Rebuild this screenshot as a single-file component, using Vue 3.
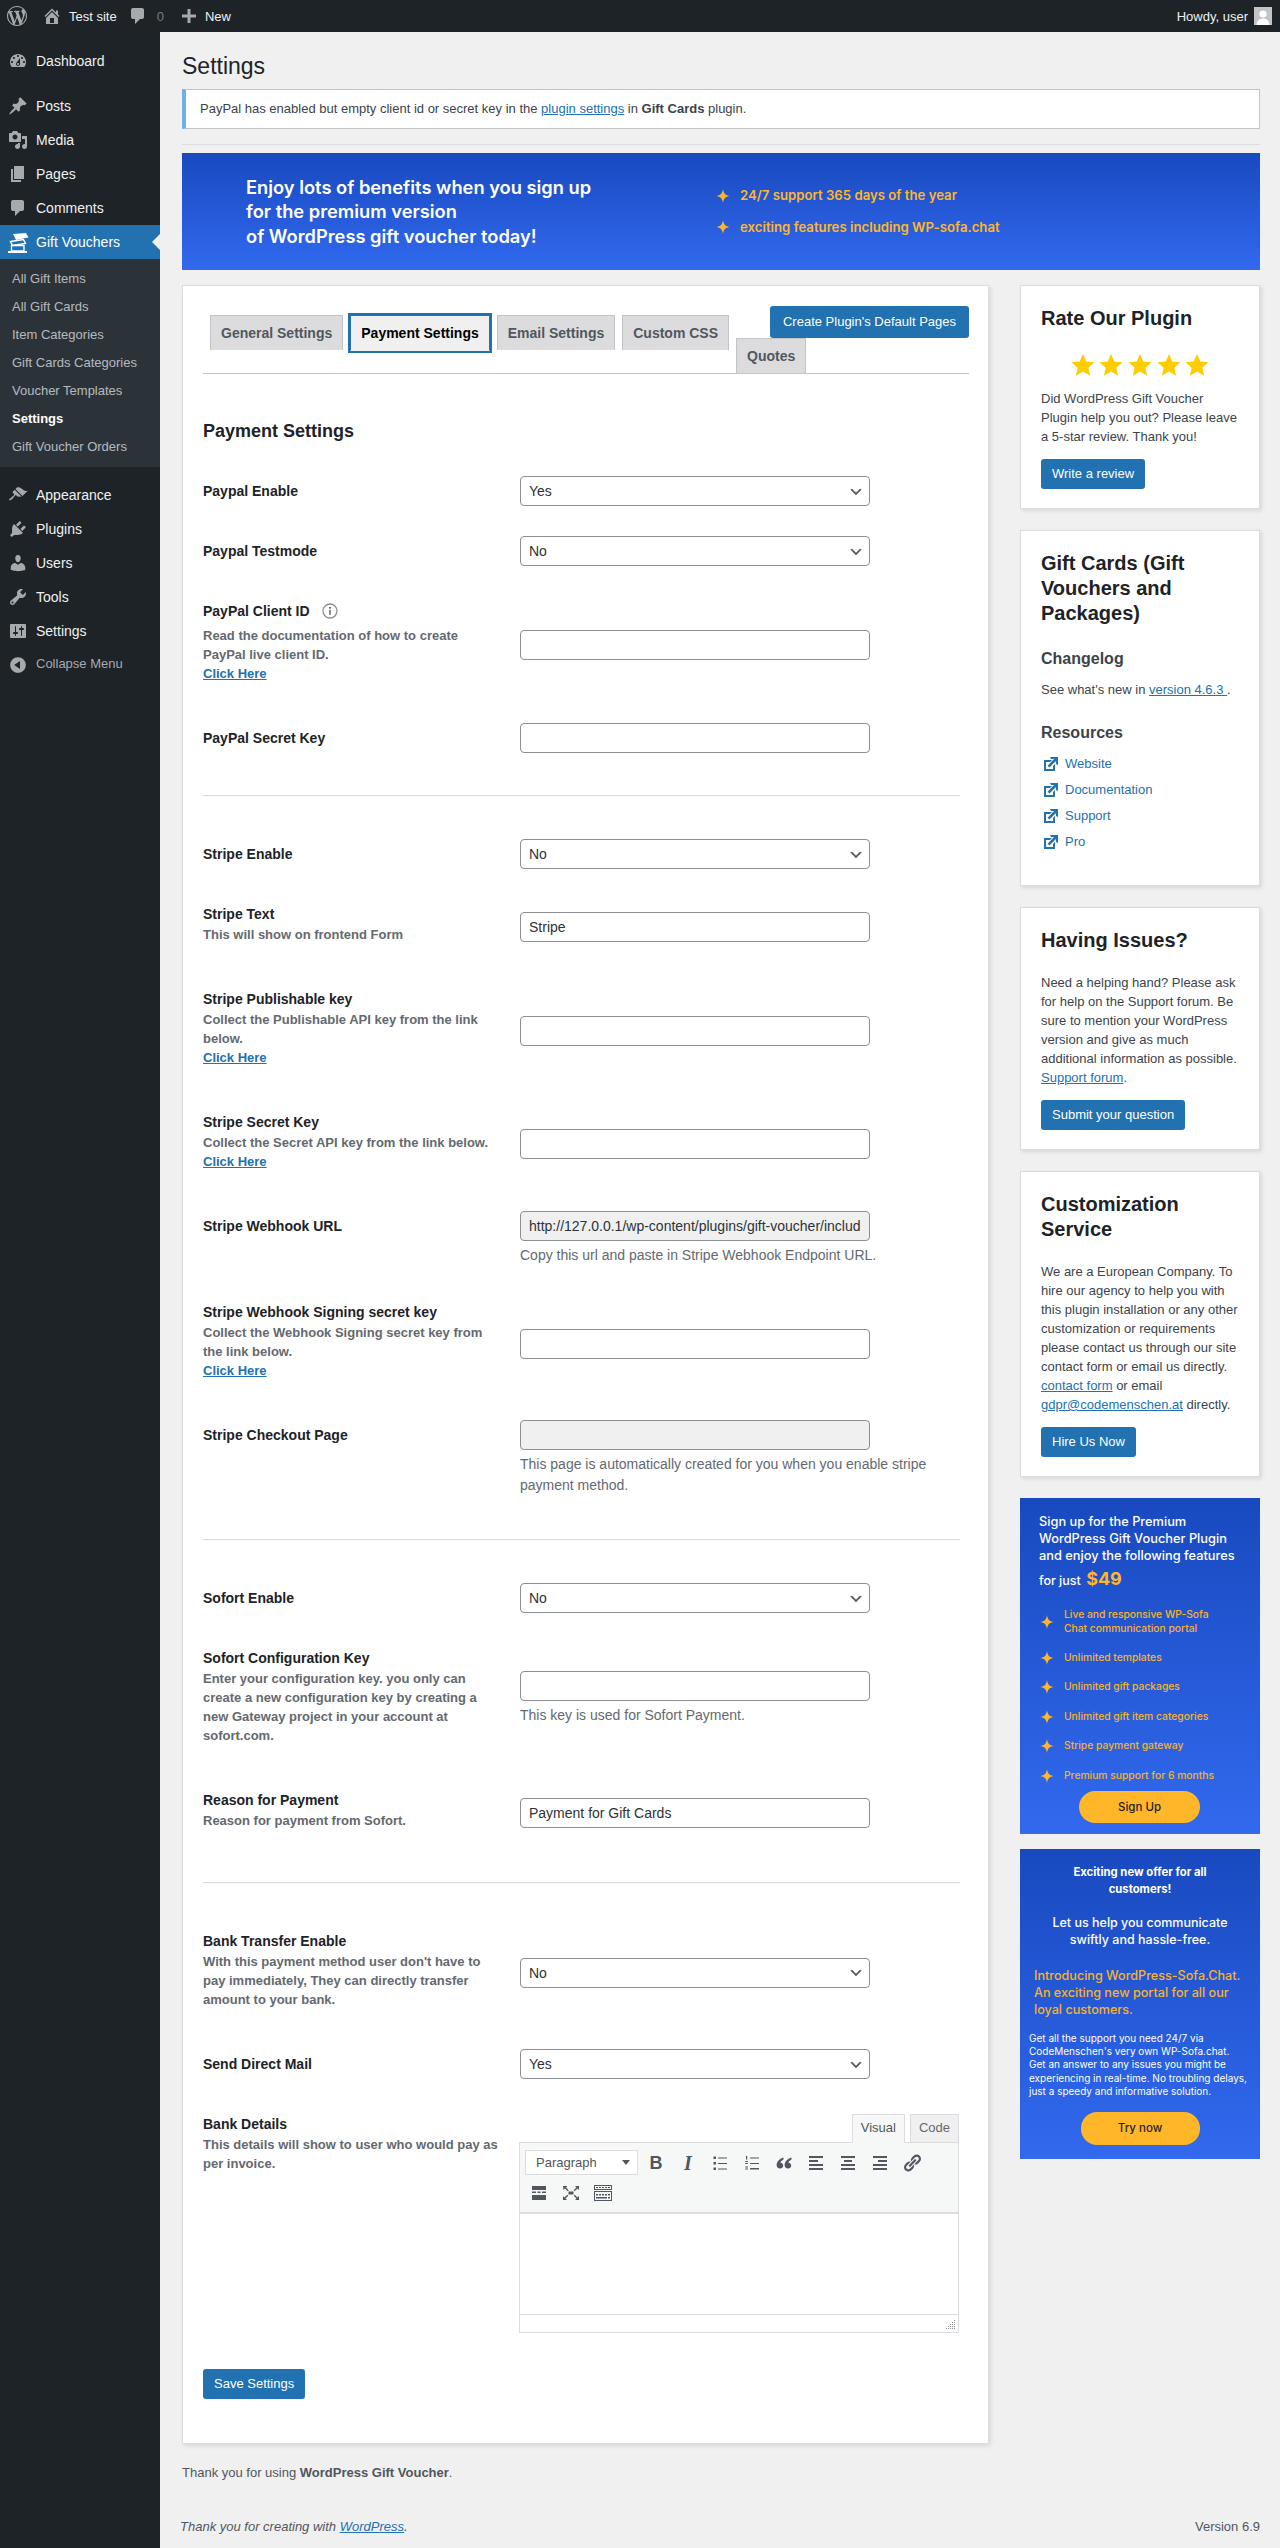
<template>
  <div class="page">
    <!-- top admin bar -->
    <header class="adminbar">
      <svg class="wp-logo" viewBox="0 0 20 20"><path :d="icons.wp" /></svg>
      <a class="bar-item first"><svg viewBox="0 0 20 20"><path :d="icons.home" /></svg>Test site</a>
      <a class="bar-item comments"><svg viewBox="0 0 20 20"><path :d="icons.comments" /></svg><span class="dim">0</span></a>
      <a class="bar-item plus"><svg viewBox="0 0 20 20"><path :d="icons.plus" /></svg>New</a>
      <div class="howdy">
        Howdy, user
        <svg class="avatar" viewBox="0 0 18 18">
          <rect width="18" height="18" fill="#c3c4c7" />
          <circle cx="9" cy="7" r="3.6" fill="#fff" />
          <path d="M2.5 18c.4-4.5 3-6.5 6.5-6.5s6.1 2 6.5 6.5z" fill="#fff" />
        </svg>
      </div>
    </header>

    <div class="layout">
      <!-- left menu -->
      <aside class="sidebar">
        <ul class="menu">
          <li v-for="item in menuItems" :key="item.text" :class="{ current: item.current, gap: item.gap }">
            <svg v-if="item.icon" class="menu-icon" viewBox="0 0 20 20"><path :d="icons[item.icon]" /></svg>
            <svg v-else class="menu-icon gift" viewBox="0 0 22 20">
              <path d="M6 1 19 0l2.5 4.5L9 7z" fill="#fff" />
              <path d="M3.5 8.5 16.5 6.5l2 4L5.5 12.5z" fill="none" stroke="#fff" stroke-width="1.4" />
              <path d="M4.5 12.5H17V18H4.5z" fill="none" stroke="#fff" stroke-width="1.4" />
              <path d="M1 18h19v2H1z" fill="#fff" />
            </svg>
            <span>{{ item.text }}</span>
            <ul v-if="item.current" class="submenu">
              <li v-for="sub in subItems" :key="sub" :class="{ active: sub === 'Settings' }">{{ sub }}</li>
            </ul>
          </li>
          <li class="collapse">
            <svg class="menu-icon" viewBox="0 0 20 20"><path :d="icons.collapse" /></svg>
            <span>Collapse Menu</span>
          </li>
        </ul>
      </aside>

      <main class="content">
        <h1 class="page-title">Settings</h1>
        <div class="notice">
          PayPal has enabled but empty client id or secret key in the <a href="#">plugin settings</a> in <b>Gift Cards</b> plugin.
        </div>
        <div class="top-rule"></div>

        <div class="promo">
          <p class="promo-title">Enjoy lots of benefits when you sign up<br />for the premium version<br />of WordPress gift voucher today!</p>
          <ul class="promo-list">
            <li><svg viewBox="0 0 24 24"><path :d="sparkle" /></svg>24/7 support 365 days of the year</li>
            <li><svg viewBox="0 0 24 24"><path :d="sparkle" /></svg>exciting features including WP-sofa.chat</li>
          </ul>
        </div>

        <div class="columns">
          <div class="main-col">
            <section class="card settings">
              <nav class="tabs">
                <a class="btn btn-create">Create Plugin's Default Pages</a>
                <a v-for="tab in tabs" :key="tab" class="tab" :class="{ active: tab === 'Payment Settings' }">{{ tab }}</a>
              </nav>

              <h2 class="section-title">Payment Settings</h2>

              <template v-for="(rows, i) in sections" :key="i">
                <hr v-if="i > 0" class="divider" />
                <table class="form-table">
                  <tbody>
                    <tr v-for="row in rows" :key="row.label">
                      <th>
                        <div class="label" :class="{ 'has-info': row.info }">
                          {{ row.label }}
                          <svg v-if="row.info" class="info" viewBox="0 0 16 16">
                            <circle cx="8" cy="8" r="7" fill="none" stroke="#8c8f94" stroke-width="1.3" />
                            <circle cx="8" cy="4.8" r="1" fill="#50575e" />
                            <rect x="7.3" y="6.8" width="1.4" height="5" fill="#50575e" />
                          </svg>
                        </div>
                        <div v-if="row.desc" class="desc">
                          {{ row.desc }}
                          <a v-if="row.link" href="#">Click Here</a>
                        </div>
                      </th>
                      <td>
                        <select v-if="row.type === 'select'" class="field select" :value="row.value">
                          <option>Yes</option>
                          <option>No</option>
                        </select>

                        <div v-else-if="row.type === 'editor'" class="editor">
                          <div class="editor-tabs">
                            <span class="etab on">Visual</span>
                            <span class="etab">Code</span>
                          </div>
                          <div class="toolbar">
                            <div class="format">Paragraph<i></i></div>
                            <span class="tool bold">B</span>
                            <span class="tool italic">I</span>
                            <span class="tool">
                              <svg viewBox="0 0 20 20"><path d="M3.5 3.5H6V6H3.500zm0 5.500H6v2.500H3.500zm0 5.500H6V17H3.500zM8 4.500h9v1H8zm0 5.500h9v1H8zm0 5.500h9v1H8z" /></svg>
                            </span>
                            <span class="tool">
                              <svg viewBox="0 0 20 20"><path d="M4 3h1.2v3.500H4zm-.8 5H6v.9H3.200zm0 2H6v.9H3.200zm0 3.500H6v.9H3.200zm0 2H6v.9H3.200zM8 4.500h9v1H8zm0 5.500h9v1H8zm0 5h9v1.500H8z" /></svg>
                            </span>
                            <span class="tool">
                              <svg viewBox="0 0 20 20"><path d="M9.5 4.500C5.800 5.800 3.500 7.800 2.800 10.500c-.7 2.800.8 5 3.200 5 1.800 0 3.200-1.300 3.200-3 0-1.600-1.200-2.800-2.800-2.800.4-1.200 1.400-2.300 3.100-3.100zm8 0c-3.700 1.300-6 3.300-6.700 6-.7 2.800.8 5 3.200 5 1.800 0 3.200-1.300 3.200-3 0-1.600-1.200-2.800-2.800-2.800.4-1.200 1.400-2.300 3.100-3.100z" /></svg>
                            </span>
                            <span class="tool">
                              <svg viewBox="0 0 20 20"><path d="M3 3h14v2H3zm0 4h9v2H3zm0 4h14v2H3zm0 4h14v2H3z" /></svg>
                            </span>
                            <span class="tool">
                              <svg viewBox="0 0 20 20"><path d="M3 3h14v2H3zm3 4h8v2H6zm-3 4h14v2H3zm0 4h14v2H3z" /></svg>
                            </span>
                            <span class="tool">
                              <svg viewBox="0 0 20 20"><path d="M3 3h14v2H3zm5 4h9v2H8zm-5 4h14v2H3zm0 4h14v2H3z" /></svg>
                            </span>
                            <span class="tool">
                              <svg viewBox="0 0 20 20"><path :d="icons.link" /></svg>
                            </span>
                            <span class="tool">
                              <svg viewBox="0 0 20 20"><path d="M3 3h14v4H3zm0 5.500h4V10H3zm5.500 0h3V10h-3zm4.500 0h4V10h-4zM3 12h14v5H3z" /></svg>
                            </span>
                            <span class="tool">
                              <svg viewBox="0 0 20 20"><path d="M7.5 8.500h5v3h-5zM2 3h4.500L5 4.500l2.800 2.800-1 1L4 5.500 2.500 7zm16 0v4l-1.500-1.500-2.800 2.800-1-1L15.500 4.500 14 3zM2 17v-4l1.500 1.500 2.800-2.800 1 1L4.500 15.500 6 17zm16 0h-4l1.500-1.500-2.800-2.800 1-1 2.800 2.800L18 13z" /></svg>
                            </span>
                            <span class="tool">
                              <svg viewBox="0 0 20 20" fill-rule="evenodd"><path d="M1 2h18v5H1zm1 1v3h16V3zM3 4h2v1H3zm3 0h2v1H6zm3 0h2v1H9zm3 0h2v1h-2zm3 0h2v1h-2zM1 8h18v10H1zm1 1v8h16V9zm1 2h2v1.500H3zm3 0h2v1.500H6zm3 0h2v1.500H9zm3 0h2v1.500h-2zm3 0h2v1.500h-2zM3 14h11v1.500H3zm12 0h2v1.500h-2z" /></svg>
                            </span>
                          </div>
                          <div class="editor-body"></div>
                          <div class="statusbar">
                            <svg class="grip" viewBox="0 0 10 10"><path d="M8 0h1v1H8zM8 2h1v1H8zM6 2h1v1H6zM8 4h1v1H8zM6 4h1v1H6zM4 4h1v1H4zM8 6h1v1H8zM6 6h1v1H6zM4 6h1v1H4zM2 6h1v1H2zM8 8h1v1H8zM6 8h1v1H6zM4 8h1v1H4zM2 8h1v1H2zM0 8h1v1H0z" /></svg>
                          </div>
                        </div>

                        <input
                          v-else
                          class="field"
                          type="text"
                          :value="row.value"
                          :readonly="row.readonly"
                          :disabled="row.disabled"
                          :class="{ locked: row.readonly || row.disabled }"
                        />
                        <p v-if="row.note" class="note">{{ row.note }}</p>
                      </td>
                    </tr>
                  </tbody>
                </table>
              </template>

              <a class="btn btn-save">Save Settings</a>
            </section>
            <p class="thanks">Thank you for using <b>WordPress Gift Voucher</b>.</p>
          </div>

          <!-- right column -->
          <aside class="side">
            <section class="card box box-rate">
              <h3>Rate Our Plugin</h3>
              <div class="stars">
                <svg v-for="n in 5" :key="n" viewBox="0 0 24 24"><path d="M12 1l3.3 7.600 8.200.7-6.200 5.400 1.900 8L12 18.500 4.800 22.700l1.900-8L.5 9.300l8.200-.7z" /></svg>
              </div>
              <p>Did WordPress Gift Voucher Plugin help you out? Please leave a 5-star review. Thank you!</p>
              <a class="btn">Write a review</a>
            </section>

            <section class="card box box-info">
              <h3>Gift Cards (Gift Vouchers and Packages)</h3>
              <h4>Changelog</h4>
              <p>See what's new in <a href="#">version 4.6.3 </a>.</p>
              <h4 class="res">Resources</h4>
              <ul class="links">
                <li v-for="link in resourceLinks" :key="link">
                  <svg viewBox="3 3 14 16"><path d="M9 3h8v8l-2-1V6.92l-6.58 6.59-1.84-1.84L13.08 5H10zm3 12v-3l2-2v7H3V6h8L9 8H5v7h7z" /></svg>
                  <a href="#">{{ link }}</a>
                </li>
              </ul>
            </section>

            <section class="card box box-issues">
              <h3>Having Issues?</h3>
              <p>Need a helping hand? Please ask for help on the Support forum. Be sure to mention your WordPress version and give as much additional information as possible. <a href="#">Support forum</a>.</p>
              <a class="btn">Submit your question</a>
            </section>

            <section class="card box box-issues">
              <h3>Customization Service</h3>
              <p>We are a European Company. To hire our agency to help you with this plugin installation or any other customization or requirements please contact us through our site contact form or email us directly. <a href="#">contact form</a> or email <a href="#">gdpr@codemenschen.at</a> directly.</p>
              <a class="btn">Hire Us Now</a>
            </section>

            <div class="ad ad-one">
              <p class="ad-head">Sign up for the Premium<br />WordPress Gift Voucher Plugin<br />and enjoy the following features</p>
              <p class="ad-price">for just <b>$49</b></p>
              <ul class="ad-list">
                <li v-for="feature in features" :key="feature">
                  <svg viewBox="0 0 24 24"><path :d="sparkle" /></svg>
                  <span>{{ feature }}</span>
                </li>
              </ul>
              <a class="pill">Sign Up</a>
            </div>

            <div class="ad ad-two">
              <p class="ad-bold">Exciting new offer for all<br />customers!</p>
              <p class="ad-mid">Let us help you communicate<br />swiftly and hassle-free.</p>
              <p class="ad-gold">Introducing WordPress-Sofa.Chat.<br />An exciting new portal for all our<br />loyal customers.</p>
              <p class="ad-small">Get all the support you need 24/7 via<br />CodeMenschen's very own WP-Sofa.chat.<br />Get an answer to any issues you might be<br />experiencing in real-time. No troubling delays,<br />just a speedy and informative solution.</p>
              <a class="pill">Try now</a>
            </div>
          </aside>
        </div>

        <footer class="wp-footer">
          <span><i>Thank you for creating with <a href="#">WordPress</a>.</i></span>
          <span>Version 6.9</span>
        </footer>
      </main>
    </div>
  </div>
</template>

<script setup>
const icons = {
  wp: 'M20 10c0-5.51-4.49-10-10-10C4.48 0 0 4.49 0 10c0 5.52 4.48 10 10 10 5.51 0 10-4.48 10-10zM7.78 15.37L4.37 6.22c.55-.02 1.17-.08 1.17-.08.5-.06.44-1.13-.06-1.11 0 0-1.45.11-2.37.11-.18 0-.37 0-.58-.01C4.12 2.69 6.87 1.11 10 1.11c2.33 0 4.45.87 6.05 2.34-.68-.11-1.65.39-1.65 1.58 0 .74.45 1.36.9 2.1.35.61.55 1.36.55 2.46 0 1.49-1.4 5-1.4 5l-3.03-8.37c.54-.02.82-.17.82-.17.5-.05.44-1.25-.06-1.22 0 0-1.44.12-2.38.12-.87 0-2.33-.12-2.33-.12-.5-.03-.56 1.2-.06 1.22l.92.08 1.26 3.41zM17.41 10c.24-.64.74-1.87.43-4.25.7 1.29 1.05 2.71 1.05 4.25 0 3.29-1.73 6.24-4.4 7.78.97-2.59 1.94-5.2 2.92-7.78zM6.1 18.09C3.12 16.65 1.11 13.53 1.11 10c0-1.3.23-2.48.72-3.59C3.25 10.3 4.67 14.2 6.1 18.09zm4.03-6.63l2.58 6.98c-.86.29-1.76.45-2.71.45-.79 0-1.57-.11-2.29-.33.81-2.38 1.62-4.74 2.42-7.1z',
  home: 'M16 8.5l1.53 1.53-1.06 1.06L10 4.62l-6.47 6.47-1.06-1.06L10 2.5l4 4v-2h2v4zm-6-2.46l6 5.99V18H4v-5.97zM12 17v-5H8v5h4z',
  comments: 'M5 2h9c1.1 0 2 .9 2 2v7c0 1.1-.9 2-2 2h-2l-5 5v-5H5c-1.1 0-2-.9-2-2V4c0-1.1.9-2 2-2z',
  plus: 'M17 8.5v3h-5.5V17h-3v-5.5H3v-3h5.5V3h3v5.5z',
  dashboard: 'M3.76 16h12.48c1.1-1.37 1.76-3.11 1.76-5 0-4.42-3.58-8-8-8s-8 3.58-8 8c0 1.89.66 3.63 1.76 5zM10 4c.55 0 1 .45 1 1s-.45 1-1 1-1-.45-1-1 .45-1 1-1zM6 6c.55 0 1 .45 1 1s-.45 1-1 1-1-.45-1-1 .45-1 1-1zm8 0c.55 0 1 .45 1 1s-.45 1-1 1-1-.45-1-1 .45-1 1-1zm-5.37 5.55L12 7v6c0 1.1-.9 2-2 2s-2-.9-2-2c0-.57.24-1.08.63-1.45zM4 10c.55 0 1 .45 1 1s-.45 1-1 1-1-.45-1-1 .45-1 1-1zm12 0c.55 0 1 .45 1 1s-.45 1-1 1-1-.45-1-1 .45-1 1-1zm-5 3c0-.55-.45-1-1-1s-1 .45-1 1 .45 1 1 1 1-.45 1-1z',
  post: 'M10.44 3.02l1.82-1.82 6.36 6.35-1.83 1.82c-1.05-.68-2.48-.57-3.41.36l-.75.75c-.92.93-1.04 2.35-.35 3.41l-1.83 1.82-2.41-2.41-2.8 2.79c-.42.42-3.38 2.71-3.8 2.29s1.86-3.39 2.28-3.81l2.79-2.79L4.1 9.36l1.83-1.82c1.05.69 2.48.57 3.4-.36l.75-.75c.93-.92 1.05-2.35.36-3.41z',
  media: 'M13 11V4c0-.55-.45-1-1-1h-1.67L9 1H5L3.67 3H2c-.55 0-1 .45-1 1v7c0 .55.45 1 1 1h10c.55 0 1-.45 1-1zM7 4.5c1.38 0 2.5 1.12 2.5 2.5S8.38 9.5 7 9.5 4.5 8.38 4.5 7 5.62 4.5 7 4.5zM14 6h5v10.5c0 1.38-1.12 2.5-2.5 2.5S14 17.88 14 16.5s1.12-2.5 2.5-2.5c.17 0 .34.02.5.05V9h-3V6zm-4 8.05V13h2v3.5c0 1.38-1.12 2.5-2.5 2.5S7 17.88 7 16.5 8.12 14 9.5 14c.17 0 .34.02.5.05z',
  page: 'M6 15V2h10v13H6zm-1 1h8v2H3V5h2v11z',
  appearance: 'M14.48 11.06L7.41 3.99l1.5-1.5c.5-.56 2.3-.47 3.51.32 1.21.8 1.43 1.28 2.91 2.1 1.18.64 2.45 1.26 4.45.85zm-.71.71L6.7 4.7 4.93 6.47c-.39.39-.39 1.02 0 1.41l1.06 1.06c.39.39.39 1.03 0 1.42-.6.6-1.43 1.11-2.21 1.69-.35.26-.7.53-1.01.84C1.43 13.23.76 14.8 1.18 15.23c.43.42 2-.25 3.33-1.58.31-.31.58-.66.85-1.02.57-.78 1.08-1.61 1.69-2.21.39-.39 1.02-.39 1.41 0l1.06 1.06c.39.39 1.02.39 1.41 0z',
  plugins: 'M13.11 4.36L9.87 7.6 8 5.73l3.24-3.24c.35-.34 1.05-.2 1.56.32.52.51.66 1.21.31 1.55zm-8 1.77l.91-1.12 9.01 9.01-1.19.84c-.71.71-2.63 1.16-3.82 1.16H6.14L4.9 17.26c-.59.59-1.54.59-2.12 0-.59-.58-.59-1.53 0-2.12l1.24-1.24v-3.88c0-1.13.4-3.19 1.09-3.89zm7.26 3.97l3.24-3.24c.34-.35 1.04-.21 1.55.31.52.51.66 1.21.31 1.55l-3.24 3.25z',
  users: 'M10 9.25c-2.27 0-2.73-3.44-2.73-3.44C7 4.02 7.82 2 9.97 2c2.16 0 2.98 2.02 2.71 3.81 0 0-.41 3.44-2.68 3.44zm0 2.57L12.72 10c2.39 0 4.52 2.33 4.52 4.53v2.49s-3.65 1.13-7.24 1.13c-3.65 0-7.24-1.13-7.24-1.13v-2.49c0-2.25 1.94-4.48 4.47-4.48z',
  tools: 'M16.68 9.77c-1.34 1.34-3.3 1.67-4.95.99l-5.41 6.52c-.99.99-2.59.99-3.58 0s-.99-2.59 0-3.57l6.52-5.42c-.68-1.65-.35-3.61.99-4.95 1.28-1.28 3.12-1.62 4.72-1.06l-2.89 2.89 2.82 2.82 2.86-2.87c.53 1.58.18 3.39-1.08 4.65zM3.81 16.21c.4.39 1.04.39 1.43 0 .4-.4.4-1.04 0-1.43-.39-.4-1.03-.4-1.43 0-.39.39-.39 1.03 0 1.43z',
  settings: 'M18 16V4c0-.55-.45-1-1-1H3c-.55 0-1 .45-1 1v12c0 .55.45 1 1 1h14c.55 0 1-.45 1-1zM8 11h1c.55 0 1 .45 1 1s-.45 1-1 1H8v1.5c0 .28-.22.5-.5.5s-.5-.22-.5-.5V13H6c-.55 0-1-.45-1-1s.45-1 1-1h1V5.5c0-.28.22-.5.5-.5s.5.22.5.5V11zm5-2h-1c-.55 0-1-.45-1-1s.45-1 1-1h1V5.5c0-.28.22-.5.5-.5s.5.22.5.5V7h1c.55 0 1 .45 1 1s-.45 1-1 1h-1v5.5c0 .28-.22.5-.5.5s-.5-.22-.5-.5V9z',
  collapse: 'M10 2.16c4.33 0 7.84 3.51 7.84 7.84s-3.51 7.84-7.84 7.84S2.16 14.33 2.16 10 5.71 2.16 10 2.16zm2 11.72V6.12L6.18 9.97 12 13.88z',
  link: 'M17.74 2.76c1.68 1.69 1.68 4.41 0 6.1l-1.53 1.52c-1.12 1.12-2.7 1.47-4.14 1.09l2.62-2.61.76-.77.76-.76c.84-.84.84-2.2 0-3.04-.84-.85-2.2-.85-3.04 0l-.77.76-3.38 3.38c-.37-1.44-.02-3.02 1.1-4.14l1.52-1.53c1.69-1.68 4.42-1.68 6.1 0zM8.59 13.43l5.34-5.34c.42-.42.42-1.1 0-1.52-.44-.43-1.13-.39-1.53 0l-5.33 5.34c-.42.42-.42 1.1 0 1.52.44.43 1.13.39 1.52 0zm-.76 2.29l4.14-4.15c.38 1.44.03 3.02-1.09 4.14l-1.52 1.53c-1.69 1.68-4.41 1.68-6.1 0-1.68-1.68-1.68-4.42 0-6.1l1.53-1.52c1.12-1.12 2.7-1.47 4.14-1.1l-4.14 4.15c-.85.84-.85 2.2 0 3.05.84.84 2.2.84 3.04 0z'
}

const sparkle = 'M12 0c1 7.5 4 10.8 12 12-8 1.2-11 4.5-12 12-1-7.5-4-10.8-12-12 8-1.2 11-4.5 12-12z'

const menuItems = [
  { text: 'Dashboard', icon: 'dashboard' },
  { text: 'Posts', icon: 'post', gap: true },
  { text: 'Media', icon: 'media' },
  { text: 'Pages', icon: 'page' },
  { text: 'Comments', icon: 'comments' },
  { text: 'Gift Vouchers', current: true },
  { text: 'Appearance', icon: 'appearance', gap: true },
  { text: 'Plugins', icon: 'plugins' },
  { text: 'Users', icon: 'users' },
  { text: 'Tools', icon: 'tools' },
  { text: 'Settings', icon: 'settings' }
]

const subItems = [
  'All Gift Items',
  'All Gift Cards',
  'Item Categories',
  'Gift Cards Categories',
  'Voucher Templates',
  'Settings',
  'Gift Voucher Orders'
]

const tabs = ['General Settings', 'Payment Settings', 'Email Settings', 'Custom CSS', 'Quotes']

const sections = [
  [
    { label: 'Paypal Enable', type: 'select', value: 'Yes' },
    { label: 'Paypal Testmode', type: 'select', value: 'No' },
    { label: 'PayPal Client ID', info: true, desc: 'Read the documentation of how to create PayPal live client ID.', link: true },
    { label: 'PayPal Secret Key' }
  ],
  [
    { label: 'Stripe Enable', type: 'select', value: 'No' },
    { label: 'Stripe Text', desc: 'This will show on frontend Form', value: 'Stripe' },
    { label: 'Stripe Publishable key', desc: 'Collect the Publishable API key from the link below.', link: true },
    { label: 'Stripe Secret Key', desc: 'Collect the Secret API key from the link below.', link: true },
    {
      label: 'Stripe Webhook URL',
      value: 'http://127.0.0.1/wp-content/plugins/gift-voucher/includes/stripe/webhook.php',
      readonly: true,
      note: 'Copy this url and paste in Stripe Webhook Endpoint URL.'
    },
    { label: 'Stripe Webhook Signing secret key', desc: 'Collect the Webhook Signing secret key from the link below.', link: true },
    {
      label: 'Stripe Checkout Page',
      disabled: true,
      note: 'This page is automatically created for you when you enable stripe payment method.'
    }
  ],
  [
    { label: 'Sofort Enable', type: 'select', value: 'No' },
    {
      label: 'Sofort Configuration Key',
      desc: 'Enter your configuration key. you only can create a new configuration key by creating a new Gateway project in your account at sofort.com.',
      note: 'This key is used for Sofort Payment.'
    },
    { label: 'Reason for Payment', desc: 'Reason for payment from Sofort.', value: 'Payment for Gift Cards' }
  ],
  [
    {
      label: 'Bank Transfer Enable',
      type: 'select',
      value: 'No',
      desc: "With this payment method user don't have to pay immediately, They can directly transfer amount to your bank."
    },
    { label: 'Send Direct Mail', type: 'select', value: 'Yes' },
    { label: 'Bank Details', type: 'editor', desc: 'This details will show to user who would pay as per invoice.' }
  ]
]

const resourceLinks = ['Website', 'Documentation', 'Support', 'Pro']

const features = [
  'Live and responsive WP-Sofa\nChat communication portal',
  'Unlimited templates',
  'Unlimited gift packages',
  'Unlimited gift item categories',
  'Stripe payment gateway',
  'Premium support for 6 months'
]
</script>

<style>
html,
body {
  margin: 0;
  background: #f0f0f1;
}
</style>

<style scoped>
.page {
  min-height: 2548px;
  font-family: "Liberation Sans", Arial, sans-serif;
  font-size: 13px;
  line-height: 19px;
  color: #3c434a;
  background: #f0f0f1;
  display: flex;
  flex-direction: column;
}

a {
  color: #2271b1;
}

/* admin bar */
.adminbar {
  height: 32px;
  background: #1d2327;
  color: #f0f0f1;
  display: flex;
  align-items: center;
  flex: none;
}

.adminbar svg {
  fill: #a7aaad;
}

.wp-logo {
  width: 20px;
  height: 20px;
  margin-left: 7px;
}

.bar-item {
  display: flex;
  align-items: center;
  color: #f0f0f1;
}

.bar-item svg {
  width: 20px;
  height: 20px;
}

.bar-item.first {
  margin-left: 15px;
}

.bar-item.first svg {
  margin-right: 7px;
}

.bar-item.comments {
  margin-left: 11px;
}

.bar-item.comments svg {
  margin-right: 9px;
}

.dim {
  color: #787c82;
}

.bar-item.plus {
  margin-left: 15px;
}

.bar-item.plus svg {
  margin-right: 6px;
}

.howdy {
  margin-left: auto;
  margin-right: 8px;
  display: flex;
  align-items: center;
  gap: 6px;
}

.avatar {
  width: 18px;
  height: 18px;
}

.layout {
  flex: 1;
  display: flex;
}

/* side menu */
.sidebar {
  width: 160px;
  flex: none;
  background: #1d2327;
}

.menu {
  list-style: none;
  margin: 12px 0;
  padding: 0;
  color: #f0f0f1;
  font-size: 14px;
}

.menu > li {
  position: relative;
  line-height: 34px;
  padding-left: 36px;
}

.menu > li.gap {
  margin-top: 11px;
}

.menu-icon {
  position: absolute;
  left: 8px;
  top: 7px;
  width: 20px;
  height: 20px;
  fill: #a7aaad;
}

.menu > li.current {
  padding-left: 0;
}

.menu > li.current > span {
  display: block;
  height: 34px;
  padding-left: 36px;
  background: #2271b1;
  color: #fff;
}

.menu > li.current::after {
  content: "";
  position: absolute;
  right: 0;
  top: 9px;
  border: 8px solid transparent;
  border-right-color: #f0f0f1;
  border-left: 0;
}

.menu-icon.gift {
  top: 8px;
  left: 7px;
  width: 22px;
  height: 20px;
  z-index: 1;
}

.submenu {
  list-style: none;
  margin: 0;
  padding: 6px 0;
  background: #2c3338;
  font-size: 13px;
  line-height: 28px;
  color: rgba(240, 246, 252, 0.7);
}

.submenu li {
  padding-left: 12px;
  height: 28px;
}

.submenu .active {
  color: #fff;
  font-weight: 700;
}

.menu > li.collapse {
  font-size: 13px;
  color: #a7aaad;
  line-height: 32px;
}

/* main area */
.content {
  flex: 1;
  min-width: 0;
  padding: 0 20px 0 22px;
  display: flex;
  flex-direction: column;
}

.page-title {
  font-size: 23px;
  font-weight: 400;
  line-height: 30px;
  color: #1d2327;
  margin: 19px 0 0;
}

.notice {
  margin-top: 8px;
  height: 40px;
  box-sizing: border-box;
  padding: 9px 14px 0;
  background: #fff;
  border: 1px solid #c3c4c7;
  border-left: 4px solid #72aee6;
}

.top-rule {
  height: 1px;
  background: #dcdcde;
  margin-top: 15px;
}

.promo {
  margin-top: 8px;
  height: 117px;
  background: linear-gradient(#1849bf, #3269ee);
  display: flex;
  align-items: center;
  padding-left: 64px;
}

.promo-title {
  margin: 0;
  width: 470px;
  color: #fff;
  font-family: Inter, sans-serif;
  font-size: 18.3px;
  font-weight: 600;
  line-height: 24.5px;
}

.promo-list {
  list-style: none;
  margin: 0;
  padding: 0;
  color: #ffb629;
  font-family: Inter, sans-serif;
  font-size: 13.2px;
  font-weight: 600;
}

.promo-list li {
  display: flex;
  align-items: center;
  height: 31.5px;
  white-space: nowrap;
}

.promo-list svg {
  width: 14px;
  height: 16px;
  margin-right: 10px;
  fill: #ffb629;
}

.columns {
  margin-top: 15px;
  display: flex;
  gap: 31px;
  align-items: flex-start;
}

.main-col {
  width: 807px;
  flex: none;
}

.card {
  background: #fff;
  border: 1px solid #dcdcde;
  box-shadow: 2px 2px 4px rgba(0, 0, 0, 0.1);
  box-sizing: border-box;
}

.settings {
  padding: 20px 19px 44px 20px;
}

/* tabs */
.tabs {
  padding-top: 9px;
  border-bottom: 1px solid #c3c4c7;
}

.tabs::after {
  content: "";
  display: block;
  clear: both;
}

.tab {
  float: left;
  margin-left: 7px;
  padding: 5px 10px;
  border: 1px solid #c3c4c7;
  border-bottom: 0;
  background: #dcdcde;
  color: #50575e;
  font-size: 14px;
  font-weight: 700;
  line-height: 24px;
}

.tab.active {
  position: relative;
  background: #f0f0f1;
  color: #000;
  border-color: #2271b1;
  border-bottom: 1px solid #f0f0f1;
  margin-bottom: -1px;
  box-shadow: 0 0 0 2px #2271b1;
}

.btn {
  display: inline-block;
  box-sizing: border-box;
  height: 30px;
  line-height: 30px;
  padding: 0 11px;
  background: #2271b1;
  color: #fff;
  border-radius: 3px;
  font-size: 13px;
}

.btn-create {
  float: right;
  margin-top: -9px;
  height: 32px;
  line-height: 32px;
  padding: 0 13px;
}

.section-title {
  margin: 45px 0 18px;
  font-size: 18px;
  line-height: 24px;
  color: #1d2327;
}

.divider {
  margin: 27px 9px 27px 0;
  border: 0;
  height: 0;
  border-top: 1px solid #dcdcde;
  border-bottom: 1px solid #f6f7f7;
}

/* form rows */
.form-table {
  width: 766px;
  table-layout: fixed;
  border-collapse: collapse;
}

.form-table th {
  width: 307px;
  box-sizing: border-box;
  padding: 21px 10px 21px 0;
  vertical-align: top;
  text-align: left;
}

.form-table td {
  padding: 15px 10px;
  vertical-align: middle;
}

.label {
  font-size: 14px;
  line-height: 18px;
  font-weight: 700;
  color: #1d2327;
}

.label.has-info {
  display: flex;
  align-items: center;
  gap: 12px;
  margin-bottom: 6px;
}

.info {
  width: 16px;
  height: 16px;
}

.desc {
  margin: 2px 0 4px;
  font-size: 13px;
  line-height: 19px;
  font-weight: 700;
  color: #646970;
}

.desc a {
  display: block;
}

.field {
  display: block;
  width: 350px;
  height: 30px;
  box-sizing: border-box;
  padding: 0 8px;
  border: 1px solid #8c8f94;
  border-radius: 4px;
  background: #fff;
  color: #2c3338;
  font-family: inherit;
  font-size: 14px;
  line-height: 28px;
  margin: 0;
}

.field.locked {
  background: #f0f0f1;
  opacity: 1;
}

.select {
  appearance: none;
  -webkit-appearance: none;
  padding-right: 24px;
  background: #fff url("data:image/svg+xml,%3Csvg xmlns='http://www.w3.org/2000/svg' width='20' height='20' viewBox='0 0 20 20'%3E%3Cpath d='M5 6l5 5 5-5 2 1-7 7-7-7z' fill='%23555'/%3E%3C/svg%3E") no-repeat right 5px top 55%;
  background-size: 16px 16px;
}

.note {
  margin: 4px 0 1px;
  font-size: 14px;
  line-height: 21px;
  color: #646970;
}

/* tiny editor */
.editor {
  width: 440px;
  margin-left: -1px;
}

.editor-tabs {
  display: flex;
  justify-content: flex-end;
  gap: 5px;
  padding-top: 5px;
  margin-bottom: -1px;
  position: relative;
}

.etab {
  box-sizing: border-box;
  height: 29px;
  line-height: 26px;
  padding: 0 8px;
  background: #f0f0f1;
  border: 1px solid #dcdcde;
  color: #646970;
  font-size: 13px;
}

.etab.on {
  background: #f6f7f7;
  border-bottom-color: #f6f7f7;
  color: #50575e;
}

.toolbar {
  box-sizing: border-box;
  height: 72px;
  padding: 5px 0 0 3px;
  background: #f6f7f7;
  border: 1px solid #dcdcde;
  border-bottom: 2px solid #dcdcde;
  display: flex;
  flex-wrap: wrap;
  align-content: flex-start;
}

.format {
  box-sizing: border-box;
  width: 113px;
  height: 25px;
  margin: 2px 2px 3px 2px;
  padding-left: 10px;
  background: #fff;
  border: 1px solid #dcdcde;
  color: #50575e;
  font-size: 13px;
  line-height: 23px;
  position: relative;
}

.format i {
  position: absolute;
  right: 7px;
  top: 9px;
  border: 4px solid transparent;
  border-top: 5px solid #50575e;
  border-bottom: 0;
}

.tool {
  width: 32px;
  height: 30px;
  display: flex;
  align-items: center;
  justify-content: center;
  color: #50575e;
}

.tool svg {
  width: 20px;
  height: 20px;
  fill: #50575e;
}

.bold {
  font-size: 18px;
  font-weight: 700;
}

.italic {
  font-family: "Liberation Serif", serif;
  font-size: 20px;
  font-weight: 700;
  font-style: italic;
}

.editor-body {
  height: 100px;
  border-left: 1px solid #dcdcde;
  border-right: 1px solid #dcdcde;
  background: #fff;
}

.statusbar {
  box-sizing: border-box;
  height: 19px;
  border: 1px solid #dcdcde;
  position: relative;
}

.grip {
  position: absolute;
  right: 2px;
  bottom: 2px;
  width: 10px;
  height: 10px;
  fill: #8c8f94;
}

.btn-save {
  margin-top: 21px;
}

.thanks {
  margin: 19px 0 0;
  color: #50575e;
}

/* right column */
.side {
  width: 240px;
  flex: none;
}

.box {
  padding: 20px 20px 19px;
  margin-bottom: 21px;
}

.box h3 {
  margin: 0;
  font-size: 20px;
  line-height: 25px;
  color: #1d2327;
}

.box p {
  margin: 0;
}

.box .btn {
  margin-top: 13px;
  vertical-align: top;
  display: block;
  width: fit-content;
}

.box-rate h3 {
  margin-bottom: 22px;
}

.stars {
  display: flex;
  justify-content: center;
  gap: 4.7px;
  height: 24px;
  margin-bottom: 12px;
}

.stars svg {
  width: 24px;
  height: 24px;
  fill: #ffcc00;
}

.box-info h4 {
  margin: 23px 0 11px;
  font-size: 16px;
  line-height: 20px;
  color: #3c434a;
}

.box-info h4.res {
  margin: 24px 0 11px;
}

.links {
  list-style: none;
  margin: 0;
  padding: 0 0 0 3px;
}

.links li {
  display: flex;
  align-items: flex-start;
  height: 26px;
}

.links svg {
  width: 14px;
  height: 16px;
  margin: 3px 7px 0 0;
  fill: #2271b1;
  flex: none;
}

.links a {
  text-decoration: none;
}

.box-info {
  height: 356px;
}

.box-issues h3 {
  margin-bottom: 20px;
}

/* promo images */
.ad {
  background: linear-gradient(#1849bf, #3269ee);
  color: #fff;
  font-family: Inter, sans-serif;
  box-sizing: border-box;
}

.ad p {
  margin: 0;
}

.ad-one {
  height: 336px;
  padding: 15px 0 0 19px;
  margin-bottom: 15px;
}

.ad-head {
  font-size: 12.8px;
  font-weight: 500;
  line-height: 17px;
}

.ad .ad-price {
  font-size: 12.5px;
  font-weight: 500;
  line-height: 24px;
  margin-top: 3px;
}

.ad-price b {
  color: #ffb629;
  font-size: 18px;
  font-weight: 700;
  margin-left: 2px;
}

.ad-list {
  list-style: none;
  margin: 15px 0 0;
  padding: 0;
  color: #f6b32e;
  font-size: 10.3px;
  font-weight: 500;
  line-height: 13.5px;
}

.ad-list li {
  display: flex;
  align-items: center;
  margin-bottom: 15.5px;
  white-space: pre-line;
}

.ad-list svg {
  width: 14px;
  height: 14px;
  fill: #ffb629;
  margin: 0 10px 0 1px;
  flex: none;
}

.pill {
  display: block;
  margin: 0 auto;
  height: 32px;
  line-height: 32px;
  text-align: center;
  background: #ffb629;
  color: #1d2327;
  border-radius: 16px;
  font-size: 11.5px;
  font-weight: 500;
}

.ad-one .pill {
  width: 121px;
  margin: -7px 0 0 40px;
}

.ad-two {
  height: 310px;
  padding-top: 15px;
}

.ad-bold {
  text-align: center;
  font-size: 11.3px;
  font-weight: 700;
  line-height: 17px;
}

.ad .ad-mid {
  text-align: center;
  font-size: 12.5px;
  font-weight: 500;
  line-height: 17px;
  margin-top: 16px;
}

.ad .ad-gold {
  color: #f6b32e;
  font-size: 12.6px;
  font-weight: 500;
  line-height: 17px;
  margin: 19px 0 0 14px;
  white-space: nowrap;
}

.ad .ad-small {
  font-size: 10px;
  line-height: 13.2px;
  margin: 14px 0 0 9px;
  white-space: nowrap;
}

.ad-two .pill {
  width: 119px;
  height: 33px;
  margin-top: 14px;
}

.wp-footer {
  margin: 35px 0 0 -2px;
  display: flex;
  justify-content: space-between;
  color: #50575e;
}
</style>
